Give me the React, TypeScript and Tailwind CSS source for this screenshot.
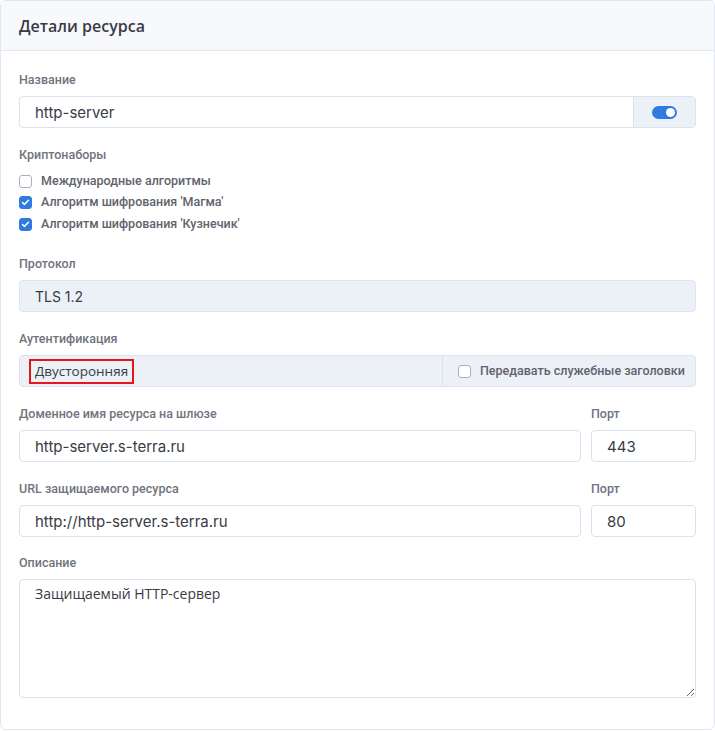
import { Check } from "lucide-react";

const labelCls = "block text-[12.5px] font-medium text-[#71737e] mb-[8px] leading-[16px]";
const inputCls =
  "h-[32px] w-full rounded-[4px] border border-[#d9e2ee] bg-white px-[15px] text-[15px] text-[#3a3b45] outline-none";
const roboto = { fontFamily: "Roboto, 'Open Sans', sans-serif" };
const inter = { fontFamily: "Inter, sans-serif" };

function Box({ checked, label }: { checked?: boolean; label?: string }) {
  return (
    <label className="flex items-center gap-[9px] h-[20px]">
      <span
        className={
          "flex h-[13px] w-[13px] shrink-0 items-center justify-center rounded-[3px] border " +
          (checked ? "border-[#2f7be0] bg-[#2f7be0]" : "border-[#a9b0bd] bg-white")
        }
      >
        {checked && <Check size={9} strokeWidth={4} color="white" />}
      </span>
      {label && (
        <span className="text-[12.5px] font-medium text-[#61636d]" style={roboto}>
          {label}
        </span>
      )}
    </label>
  );
}

function Label({ text, className = "" }: { text: string; className?: string }) {
  return (
    <span className={labelCls + " " + className} style={roboto}>
      {text}
    </span>
  );
}

export default function App() {
  return (
    <div className="bg-white p-0" style={{ fontFamily: "'Open Sans', 'Noto Sans', sans-serif" }}>
      <div className="w-[715px] h-[730px] rounded-[6px] border border-[#e3e6f0] bg-white overflow-hidden">
        <div className="h-[50px] flex items-center px-[18px] bg-[#f8f9fc] border-b border-[#e3e6f0]">
          <h2 className="text-[16px] font-semibold text-[#3a3b45]">Детали ресурса</h2>
        </div>

        <div className="px-[18px] pt-[21px]">
          <Label text="Название" />
          <div className="flex h-[32px] rounded-[4px] border border-[#d9e2ee] overflow-hidden">
            <input
              defaultValue="http-server"
              className="flex-1 h-full px-[15px] text-[15px] text-[#3a3b45] outline-none"
              style={inter}
            />
            <div className="w-[62px] flex items-center justify-center bg-[#ecf1f8] border-l border-[#d9e2ee]">
              <div className="relative h-[13px] w-[25px] rounded-full bg-[#2f7be0]">
                <div className="absolute right-[2px] top-[2px] h-[9px] w-[9px] rounded-full bg-white" />
              </div>
            </div>
          </div>

          <Label text="Криптонаборы" className="mt-[19px]" />
          <div className="flex flex-col gap-[1.5px]">
            <Box label="Международные алгоритмы" />
            <Box checked label="Алгоритм шифрования 'Магма'" />
            <Box checked label="Алгоритм шифрования 'Кузнечик'" />
          </div>

          <Label text="Протокол" className="mt-[22px]" />
          <div
            className="h-[32px] flex items-center rounded-[4px] border border-[#dde4ee] bg-[#ecf0f7] px-[15px] text-[14px] text-[#3a3b45]"
            style={inter}
          >
            TLS 1.2
          </div>

          <Label text="Аутентификация" className="mt-[19px]" />
          <div className="flex h-[32px] rounded-[4px] border border-[#dde4ee] bg-[#ecf0f7]">
            <div className="flex-1 flex items-center pl-[9px]">
              <span className="border-2 border-[#e8141c] px-[4px] h-[25px] flex items-center text-[13.5px] text-[#3a3b45]">
                Двусторонняя
              </span>
            </div>
            <div className="w-[253px] flex items-center pl-[15px] border-l border-[#dbe2ec]">
              <Box label="Передавать служебные заголовки" />
            </div>
          </div>

          <div className="flex gap-[10px] mt-[19px]">
            <div className="flex-1">
              <Label text="Доменное имя ресурса на шлюзе" />
              <input defaultValue="http-server.s-terra.ru" className={inputCls} style={inter} />
            </div>
            <div className="w-[105px]">
              <Label text="Порт" />
              <input defaultValue="443" className={inputCls} style={inter} />
            </div>
          </div>

          <div className="flex gap-[10px] mt-[19px]">
            <div className="flex-1">
              <Label text="URL защищаемого ресурса" />
              <input defaultValue="http://http-server.s-terra.ru" className={inputCls} style={inter} />
            </div>
            <div className="w-[105px]">
              <Label text="Порт" />
              <input defaultValue="80" className={inputCls} style={inter} />
            </div>
          </div>

          <Label text="Описание" className="mt-[18px]" />
          <textarea
            defaultValue="Защищаемый HTTP-сервер"
            className="block w-full h-[119px] rounded-[4px] border border-[#d9e2ee] px-[15px] pt-[2px] text-[14px] leading-[24px] text-[#3a3b45] outline-none"
          />
        </div>
      </div>
    </div>
  );
}
